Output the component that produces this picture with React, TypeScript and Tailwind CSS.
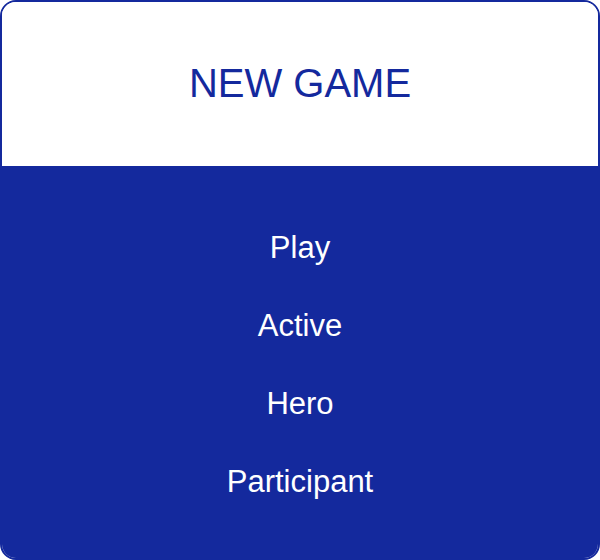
export default function App() {
  const items = ['Play', 'Active', 'Hero', 'Participant'];

  return (
    <div className="h-[560px] w-[600px] font-['Liberation_Sans',Arial,sans-serif]">
      <div className="flex h-full flex-col overflow-hidden rounded-[16px] border-2 border-[#14299d]">
        <header className="flex h-[164px] items-center justify-center bg-white">
          <h1 className="-mt-[2px] text-[40px] leading-none text-[#14299d]">NEW GAME</h1>
        </header>
        <main className="flex flex-1 flex-col items-center bg-[#14299d] pt-[42px] pb-[38px]">
          {items.map((item) => (
            <div key={item} className="flex h-[78px] items-center text-[31px] leading-none text-white">
              {item}
            </div>
          ))}
        </main>
      </div>
    </div>
  );
}
